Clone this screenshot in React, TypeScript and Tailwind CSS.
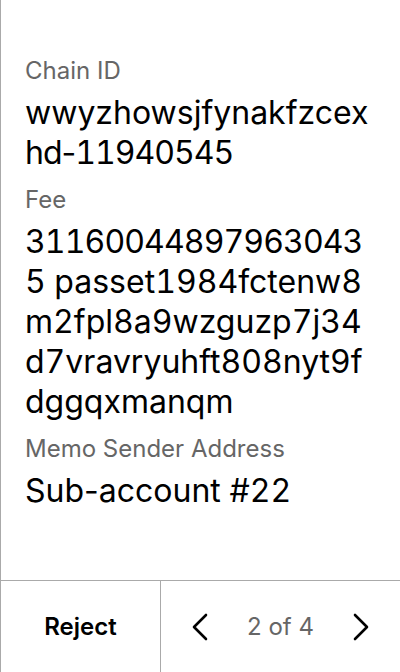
import type { ReactNode } from "react";

// lines are split the same way the device wraps them
const fields: { label: string; lines: ReactNode[] }[] = [
  {
    label: "Chain ID",
    lines: [
      "wwyzhowsjfynakfzcex",
      <span className="tracking-[-1px]">
        hd<span className="normal-nums">-</span>11940545
      </span>,
    ],
  },
  {
    label: "Fee",
    lines: [
      <span className="tracking-[-0.9px]">31160044897963043</span>,
      "5 passet1984fctenw8",
      "m2fpl8a9wzguzp7j34",
      "d7vravryuhft808nyt9f",
      "dggqxmanqm",
    ],
  },
  {
    label: "Memo Sender Address",
    lines: [
      <>
        Sub<span className="normal-nums">-</span>account #22
      </>,
    ],
  },
];

function Chevron({ dir }: { dir: "left" | "right" }) {
  return (
    <svg width="28" height="30" viewBox="0 0 28 30" fill="none" stroke="black" strokeWidth="2.6" strokeLinecap="round" strokeLinejoin="round">
      {dir === "left" ? <polyline points="20,3 8,15 20,27" /> : <polyline points="8,3 20,15 8,27" />}
    </svg>
  );
}

export default function App() {
  return (
    <div
      className="flex h-[672px] w-[400px] flex-col border-l border-[#aaaaaa] bg-white text-black"
      style={{ fontFamily: "Inter, 'Noto Sans', sans-serif" }}
    >
      <div className="flex-1 overflow-hidden pl-6 pr-6 pt-[55px]">
        {fields.map((f) => (
          <div key={f.label} className="mb-[11px]">
            <div className="text-[24px] leading-[32px] text-[#666666]">{f.label}</div>
            <div className="mt-[6px] text-[32px] leading-[40px] tabular-nums">
              {f.lines.map((l, i) => (
                <div key={i} className="whitespace-nowrap">
                  {l}
                </div>
              ))}
            </div>
          </div>
        ))}
      </div>

      {/* footer */}
      <div className="flex h-[92px] shrink-0 border-t border-[#aaaaaa]">
        <button className="flex w-[160px] items-center justify-center border-r border-[#aaaaaa] text-[24px] font-semibold">
          Reject
        </button>
        <div className="flex flex-1 items-center justify-between px-[25px]">
          <Chevron dir="left" />
          <span className="text-[24px] text-[#666666]">2 of 4</span>
          <Chevron dir="right" />
        </div>
      </div>
    </div>
  );
}
